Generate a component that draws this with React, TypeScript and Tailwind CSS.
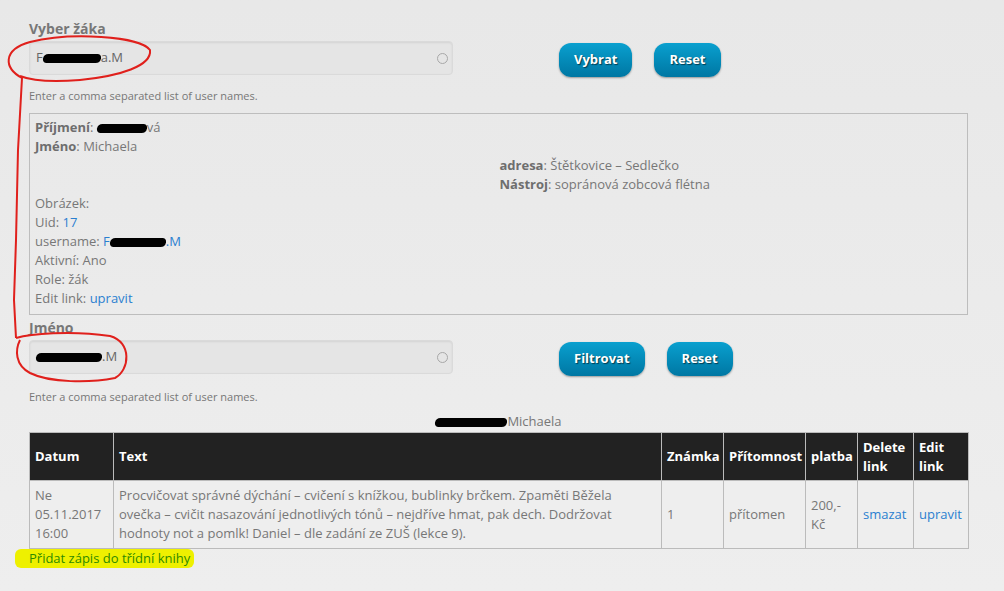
import type { ReactNode } from 'react';

const font = { fontFamily: '"Open Sans", "DejaVu Sans", sans-serif' };

function Blob({ w }: { w: number }) {
  return (
    <span
      className="inline-block h-[9px] rounded-full bg-black align-middle -skew-x-12"
      style={{ width: w }}
    />
  );
}

function PillButton({ children }: { children: ReactNode }) {
  return (
    <button className="h-[34px] px-[15px] rounded-[12px] bg-gradient-to-b from-[#0aa0cf] to-[#0077a3] text-white text-[13px] font-bold shadow-[0_1px_2px_rgba(0,0,0,0.35)] [text-shadow:1px_1px_1px_rgba(0,0,0,0.55)]">
      {children}
    </button>
  );
}

function Field({ label, value, buttons, helpClass }: { label: string; value: ReactNode; buttons: ReactNode; helpClass: string }) {
  return (
    <div>
      <div className="text-[14px] leading-[20px] font-bold text-[#777]">{label}</div>
      <div className="flex items-start mt-[2px]">
        <div className="w-[424px] h-[34px] rounded-[4px] bg-[#e5e5e5] border border-[#dadada] shadow-[inset_0_1px_2px_rgba(0,0,0,0.08)] flex items-center justify-between pl-[6px] pr-[4px]">
          <span className="text-[13px] text-[#666]">{value}</span>
          <span className="w-[11px] h-[11px] rounded-full border-[1.5px] border-[#a8a8a8]" />
        </div>
        <div className="flex gap-[22px] ml-[106px] mt-[2px]">{buttons}</div>
      </div>
      <div className={`text-[11px] leading-[16px] text-[#777] ${helpClass}`}>Enter a comma separated list of user names.</div>
    </div>
  );
}

const row = 'leading-[19px] h-[19px]';
const cell = 'border border-[#bbb] px-[5px]';

export default function App() {
  return (
    <div className="relative w-[1004px] h-[591px] overflow-hidden bg-gradient-to-b from-[#e8e8e8] to-[#eeeeee] text-[#777]" style={font}>
      <div className="pl-[29px] pt-[19px] w-[968px]">
        <Field
          label="Vyber žáka"
          value={<>F<Blob w={58} />a.M</>}
          buttons={<><PillButton>Vybrat</PillButton><PillButton>Reset</PillButton></>}
          helpClass="mt-[11px]"
        />

        <div className="mt-[9px] h-[202px] border border-[#bdbdbd] pt-[4px] px-[5px] text-[13px]">
          <div className={row}><b className="text-[#6e6e6e]">Příjmení</b>: <Blob w={50} />vá</div>
          <div className={row}><b className="text-[#6e6e6e]">Jméno</b>: Michaela</div>
          <div className="grid grid-cols-2">
            <div />
            <div className="pl-[1px]">
              <div className={row}><b className="text-[#6e6e6e]">adresa</b>: Štětkovice – Sedlečko</div>
              <div className={row}><b className="text-[#6e6e6e]">Nástroj</b>: sopránová zobcová flétna</div>
            </div>
          </div>
          <div className={row}>Obrázek:</div>
          <div className={row}>Uid: <span className="text-[#2a7fd0]">17</span></div>
          <div className={row}>username: <span className="text-[#2a7fd0]">F<Blob w={56} />.M</span></div>
          <div className={row}>Aktivní: Ano</div>
          <div className={row}>Role: žák</div>
          <div className={row}>Edit link: <span className="text-[#2a7fd0]">upravit</span></div>
        </div>

        <div className="mt-[3px]">
          <Field
            label="Jméno"
            value={<><Blob w={66} />.M</>}
            buttons={<><PillButton>Filtrovat</PillButton><PillButton>Reset</PillButton></>}
            helpClass="mt-[13px]"
          />
        </div>

        <div className="mt-[7px] text-center text-[13px] leading-[19px]"><Blob w={72} />Michaela</div>

        <table className="mt-[1px] w-[939px] table-fixed border-collapse text-[13px]">
          <colgroup>
            <col className="w-[84px]" />
            <col className="w-[548px]" />
            <col className="w-[62px]" />
            <col className="w-[82px]" />
            <col className="w-[52px]" />
            <col className="w-[56px]" />
            <col className="w-[55px]" />
          </colgroup>
          <thead>
            <tr className="bg-[#222] text-white font-bold h-[48px] text-left leading-[19px]">
              <th className={cell}>Datum</th>
              <th className={cell}>Text</th>
              <th className={cell}>Známka</th>
              <th className={`${cell} whitespace-nowrap`}>Přítomnost</th>
              <th className={cell}>platba</th>
              <th className={cell}>Delete link</th>
              <th className={cell}>Edit link</th>
            </tr>
          </thead>
          <tbody>
            <tr className="bg-[#eeeeee] h-[68px] leading-[19px]">
              <td className={cell}>Ne 05.11.2017 16:00</td>
              <td className={cell}>Procvičovat správné dýchání – cvičení s knížkou, bublinky brčkem. Zpaměti Běžela ovečka – cvičit nasazování jednotlivých tónů – nejdříve hmat, pak dech. Dodržovat hodnoty not a pomlk! Daniel – dle zadání ze ZUŠ (lekce 9).</td>
              <td className={cell}>1</td>
              <td className={cell}>přítomen</td>
              <td className={cell}>200,- Kč</td>
              <td className={`${cell} text-[#2a7fd0]`}>smazat</td>
              <td className={`${cell} text-[#2a7fd0]`}>upravit</td>
            </tr>
          </tbody>
        </table>

        <div className="text-[13px] leading-[19px]">
          <span className="inline-block -ml-[14px] pl-[14px] pr-[4px] rounded-[6px] bg-[#eef000] text-[#2f8a00]">Přidat zápis do třídní knihy</span>
        </div>
      </div>

      <svg className="absolute inset-0 pointer-events-none" width="1004" height="591">
        <path d="M22 78 C4 68 2 50 30 42 C70 32 140 36 150 50 C152 66 120 76 80 80 C55 82 35 82 20 76" fill="none" stroke="#e0201c" strokeWidth="2" />
        <path d="M22 78 L18 150 L16 240 L14 300 L16 338" fill="none" stroke="#e0201c" strokeWidth="2" />
        <path d="M16 338 C30 334 70 330 110 336 C132 342 130 370 115 378 C90 383 50 383 30 373 C15 365 15 350 20 340" fill="none" stroke="#e0201c" strokeWidth="2" />
      </svg>
    </div>
  );
}
